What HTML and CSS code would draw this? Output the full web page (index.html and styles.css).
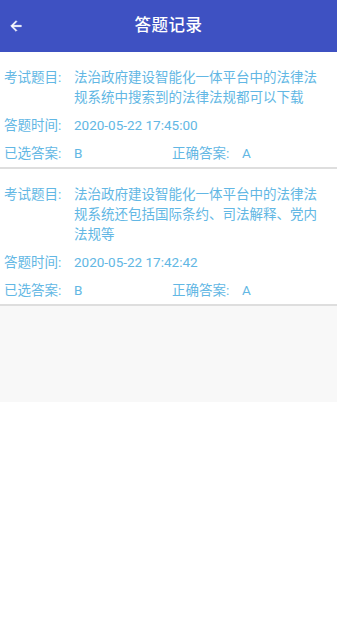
FILE: index.html
```html
<!DOCTYPE html>
<html lang="zh-CN">
<head>
<meta charset="utf-8">
<title>答题记录</title>
<link rel="stylesheet" href="styles.css">
</head>
<body>
<header class="topbar">
  <div class="topbar-left">
    <svg class="back" viewBox="0 0 24 24" width="16" height="16" aria-hidden="true">
      <path d="M20 11H7.83l5.59-5.59L12 4l-8 8 8 8 1.41-1.41L7.83 13H20v-2z" fill="#ffffff" stroke="#ffffff" stroke-width="0.8"/>
    </svg>
  </div>
  <h1 class="title">答题记录</h1>
  <div class="topbar-right"></div>
</header>
<main class="list">
  <section class="card">
    <div class="row">
      <span class="label">考试题目:</span>
      <span class="value">法治政府建设智能化一体平台中的法律法规系统中搜索到的法律法规都可以下载</span>
    </div>
    <div class="row">
      <span class="label">答题时间:</span>
      <span class="value">2020-05-22 17:45:00</span>
    </div>
    <div class="row answers">
      <div class="half">
        <span class="label">已选答案:</span>
        <span class="value">B</span>
      </div>
      <div class="half">
        <span class="label">正确答案:</span>
        <span class="value">A</span>
      </div>
    </div>
  </section>
  <section class="card">
    <div class="row">
      <span class="label">考试题目:</span>
      <span class="value">法治政府建设智能化一体平台中的法律法规系统还包括国际条约、司法解释、党内法规等</span>
    </div>
    <div class="row">
      <span class="label">答题时间:</span>
      <span class="value">2020-05-22 17:42:42</span>
    </div>
    <div class="row answers">
      <div class="half">
        <span class="label">已选答案:</span>
        <span class="value">B</span>
      </div>
      <div class="half">
        <span class="label">正确答案:</span>
        <span class="value">A</span>
      </div>
    </div>
  </section>
</main>
</body>
</html>
```
FILE: styles.css
```css
* {
  box-sizing: border-box;
}

html, body {
  margin: 0;
  padding: 0;
  background: #ffffff;
}

body {
  font-family: Roboto, "Noto Sans CJK SC", "Noto Sans", sans-serif;
  width: 337px;
  min-height: 621px;
}

.topbar {
  height: 52px;
  background: #3e51c2;
  display: grid;
  grid-template-columns: 1fr auto 1fr;
  align-items: center;
}

.topbar-left {
  display: flex;
  align-items: center;
  padding-left: 8px;
}

.back {
  display: block;
}

.title {
  margin: 0;
  color: #ffffff;
  font-size: 16.5px;
  font-weight: 500;
  letter-spacing: 0.5px;
  line-height: 52px;
}

.list {
  background: #f8f8f8;
  min-height: 350px;
}

.card {
  background: #ffffff;
  padding: 15px 15px 4px 4px;
  border-bottom: 2px solid #dedede;
  color: #62b7e4;
  font-size: 13.5px;
  line-height: 20px;
}

.row {
  display: grid;
  grid-template-columns: 70px 1fr;
}

.row + .row {
  margin-top: 8px;
}

.answers {
  grid-template-columns: 168px 1fr;
}

.half {
  display: grid;
  grid-template-columns: 70px 1fr;
}

.label {
  white-space: nowrap;
}

.value {
  word-break: break-all;
}
```
